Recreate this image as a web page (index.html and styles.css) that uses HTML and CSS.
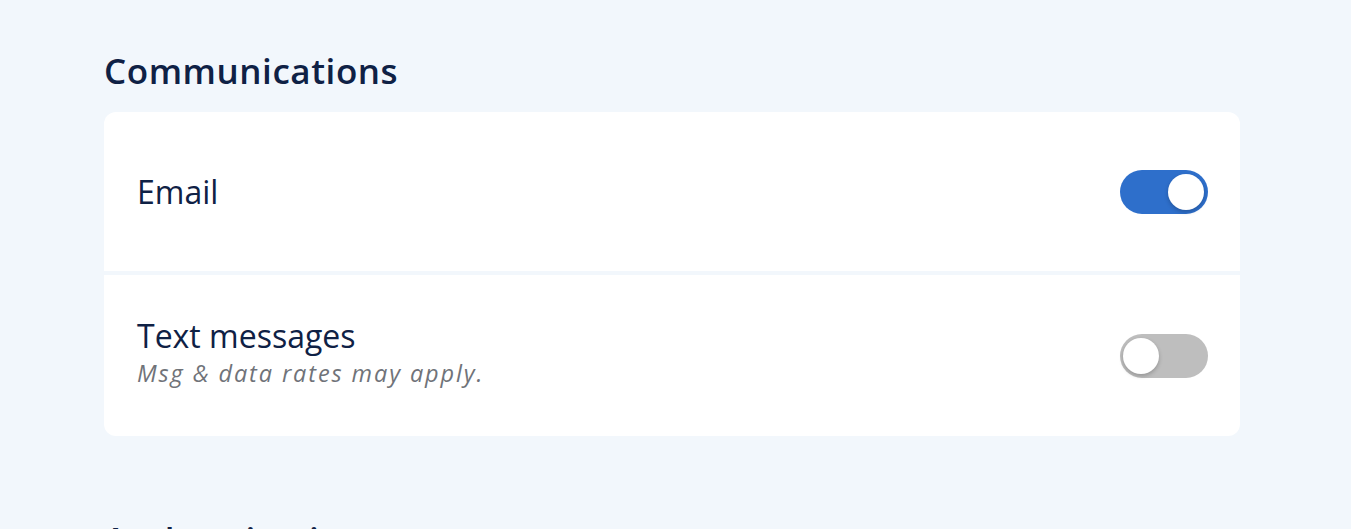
FILE: index.html
```html
<!DOCTYPE html>
<html lang="en">
<head>
<meta charset="utf-8">
<title>Settings</title>
<link rel="stylesheet" href="styles.css">
</head>
<body>
<main class="page">
  <section class="section">
    <h2 class="section-title">Communications</h2>
    <div class="card">
      <div class="row">
        <div class="row-text">
          <div class="row-label">Email</div>
        </div>
        <button class="toggle toggle-on" type="button" aria-pressed="true"><span class="knob"></span></button>
      </div>
      <div class="row">
        <div class="row-text">
          <div class="row-label">Text messages</div>
          <div class="row-hint">Msg &amp; data rates may apply.</div>
        </div>
        <button class="toggle toggle-off" type="button" aria-pressed="false"><span class="knob"></span></button>
      </div>
    </div>
  </section>
  <section class="section">
    <h2 class="section-title">Authentication</h2>
  </section>
</main>
</body>
</html>
```
FILE: styles.css
```css
* { box-sizing: border-box; }
html, body { margin: 0; padding: 0; }
body {
  background: #f2f7fc;
  font-family: "Open Sans", "Noto Sans", sans-serif;
  color: #0f2145;
  overflow: hidden;
  height: 529px;
}
.page {
  width: 1136px;
  margin-left: 104px;
  padding-top: 46px;
}
.section { margin-bottom: 79px; }
.section-title {
  margin: 0 0 16px 0;
  font-size: 35px;
  font-weight: 600;
  letter-spacing: 0.55px;
  line-height: 50px;
  color: #0f2145;
}
.card {
  background: #f2f7fc;
  border-radius: 12px;
  overflow: hidden;
  display: flex;
  flex-direction: column;
  gap: 4px;
}
.row {
  background: #ffffff;
  display: flex;
  align-items: center;
  justify-content: space-between;
  padding: 0 32px 0 33px;
  height: 159px;
}
.row + .row { height: 161px; }
.row-label {
  font-size: 32px;
  line-height: 36px;
  color: #0f2145;
}
.row-hint {
  font-size: 23.5px;
  font-style: italic;
  letter-spacing: 1.9px;
  line-height: 39px;
  color: #707379;
}
.toggle {
  position: relative;
  width: 88px;
  height: 44px;
  border: none;
  border-radius: 22px;
  padding: 0;
  cursor: pointer;
}
.toggle-on { background: #2e6fcb; }
.toggle-off { background: #bebebe; }
.knob {
  position: absolute;
  top: 4px;
  width: 36px;
  height: 36px;
  border-radius: 50%;
  background: #ffffff;
  box-shadow: 0 2px 4px rgba(0,0,0,0.22);
}
.toggle-on .knob { right: 4px; }
.toggle-off .knob { left: 3px; }
```
